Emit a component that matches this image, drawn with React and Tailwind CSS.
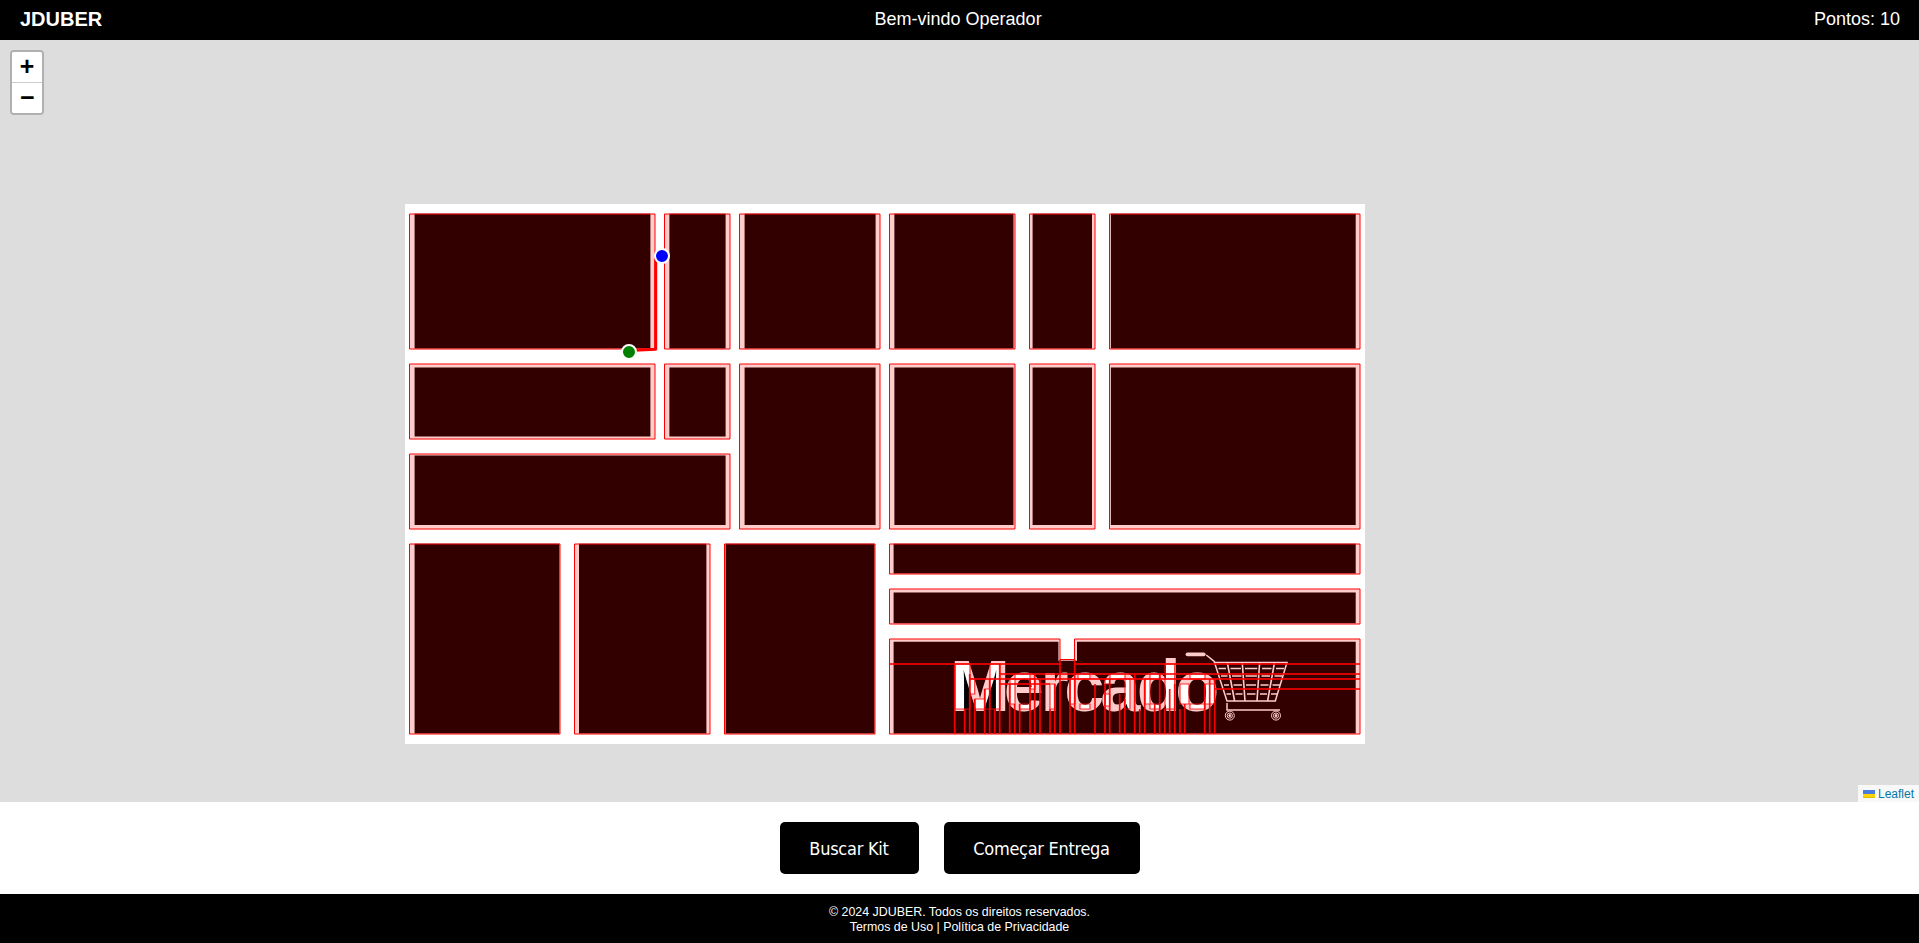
const BLOCKS = [
  [414.6, 213.8, 650.4, 348.6], [669.4, 213.8, 725.6, 348.6], [744.6, 213.8, 875.6, 348.6],
  [894.4, 213.8, 1013.5, 348.6], [1032.6, 213.8, 1092, 348.6], [1110.9, 213.8, 1355.7, 348.6],
  [414.6, 367.5, 650.4, 436.5], [669.4, 367.5, 725.6, 436.5], [744.6, 367.5, 875.6, 525],
  [894.4, 367.5, 1013.5, 525], [1032.6, 367.5, 1092, 525], [1110.9, 367.5, 1355.7, 525],
  [414.6, 455.5, 725.6, 525],
  [414.6, 543.8, 559.4, 733.5], [579, 543.8, 706.4, 733.5], [725.6, 543.8, 874.5, 733.5],
  [893.6, 543.8, 1355.7, 573.5], [893.6, 592.4, 1355.7, 623.3],
];

const ZONES = [
  [409.5, 214, 655, 349], [664.5, 214, 730, 349], [739.5, 214, 880, 349],
  [889.5, 214, 1015, 349], [1029.5, 214, 1095, 349], [1109.5, 214, 1360, 349],
  [409.5, 364, 655, 439], [664.5, 364, 730, 439], [739.5, 364, 880, 529],
  [889.5, 364, 1015, 529], [1029.5, 364, 1095, 529], [1109.5, 364, 1360, 529],
  [409.5, 454, 730, 529],
  [409.5, 544, 560, 734], [574.5, 544, 710, 734], [724.5, 544, 875, 734],
  [889.5, 544, 1360, 574], [889.5, 589, 1360, 624],
];

const box = ([x1, y1, x2, y2]) => `M${x1} ${y1}H${x2}V${y2}H${x1}Z`;

/* Letter cores left outside the blocked zones */
const CORES = [
  [955, 664, 970, 709], [970, 679, 974.7, 694], [975, 699, 985, 709], [985, 689, 990, 709], [990, 664, 1000, 709],
  [1010, 679, 1015, 704], [1019.5, 704, 1030, 709], [1030, 679, 1035, 689], [1015, 674, 1030, 679],
  [1050, 684, 1055, 709], [1070, 679, 1075, 704], [1080, 704, 1090, 709], [1078, 674, 1090, 679],
  [1105, 679, 1109.7, 684], [1110, 674, 1125, 679], [1125, 679, 1130, 709], [1105, 694, 1109.7, 706],
  [1145, 679, 1150, 704], [1150, 704, 1160, 709], [1165, 664, 1174.7, 709], [1150, 674, 1160, 679],
  [1180, 684, 1189, 704], [1190, 674, 1205, 679], [1190, 704, 1205, 709], [1205, 684, 1214.5, 704],
];

const VERTICALS = [
  [954.7, 664], [964.7, 709], [969.7, 674], [974.7, 699], [984.7, 689], [989.7, 679], [994.7, 709], [999.7, 664],
  [1009.7, 684], [1014.7, 704], [1019.7, 704], [1030, 679], [1034.7, 674], [1040, 679], [1050, 709], [1054.7, 684],
  [1060, 659.5], [1070, 679], [1074.7, 659.5], [1095, 684], [1105, 684], [1109.7, 679], [1119.7, 694], [1124.7, 699],
  [1134.7, 674], [1139.7, 709], [1144.7, 679], [1154.7, 704], [1159.7, 674], [1164.7, 709], [1169.7, 689],
  [1174.7, 684], [1180, 709], [1184.7, 704], [1204.7, 684], [1209.7, 679], [1214.7, 679],
];

const MARKET = "M889.5 639H1060V659.5H1074.5V639H1360V734H889.5Z";

function CartDrawing() {
  return (
    <g stroke="#fff" strokeWidth="1.5" fill="none">
      <path d="M1187.5 654.3H1203.7" strokeWidth="3.8" strokeLinecap="round" />
      <path d="M1206.3 655L1214.8 661.8" />
      <path d="M1214.5 662.5H1287L1275.3 701H1227Z" />
      <path d="M1227.4 663L1234.6 701M1242.3 663L1245 701M1259.6 663L1257 701M1274.4 663L1267.6 701" strokeWidth="1.6" />
      <path d="M1218.5 668.6H1226M1230.5 668.6H1241M1245 668.6H1257.3M1262 668.6H1271.5M1276 668.6H1284" />
      <path d="M1221 676H1227.5M1232 676H1241.5M1245.5 676H1257M1261.5 676H1270M1274.5 676H1282" />
      <path d="M1224 685H1229M1233.5 685H1242M1246 685H1256M1260.5 685H1268.5M1272.5 685H1280" />
      <path d="M1226.5 694H1231M1235.5 694H1242.5M1247 694H1255.5M1260 694H1267M1271 694H1277.5" />
      <path d="M1227 703V710H1280" />
      {[1229.8, 1276].map((cx) => (
        <g key={cx} strokeWidth="1">
          <circle cx={cx} cy="715.6" r="4.5" />
          <circle cx={cx} cy="715.6" r="2.6" />
          <circle cx={cx} cy="715.6" r="1" fill="#fff" />
        </g>
      ))}
    </g>
  );
}

function CityMap() {
  return (
    <svg className="block h-full w-full" viewBox="0 40 1919 762">
      <rect x="405" y="204" width="960" height="540" fill="#fff" />
      <path d={BLOCKS.map(box).join("")} fill="#000" />
      <path d="M893.6 641.8H1058.4V660.7H1077V641.8H1355.7V733.5H893.6Z" fill="#000" />
      <text
        x="950 1003.8 1040.4 1064.3 1100.2 1136.8 1175.2"
        y="711.2"
        fill="#fff"
        fontSize="72"
        fontWeight="700"
        fontFamily="'Liberation Sans', Arial, sans-serif"
      >
        Mercado
      </text>
      <CartDrawing />
      <path d={ZONES.map(box).join("")} fill="#f00" fillOpacity="0.2" stroke="#f00" strokeWidth="1" />
      <path d={MARKET + CORES.map(box).join("")} fill="#f00" fillOpacity="0.2" fillRule="evenodd" />
      <g fill="none" stroke="#f00" strokeWidth="1">
        <path d={MARKET} />
        <path d={CORES.map(box).join("")} strokeOpacity="0.8" strokeWidth="1.2" />
        <path d={VERTICALS.map(([x, y]) => `M${x} ${y}V734`).join("")} strokeOpacity="0.95" strokeWidth="1.7" />
        <path d="M889.5 664H1060M1074.5 664H1360M1000 674H1360M970 679H1360M1000 684H1050M1214 689H1360" strokeOpacity="0.8" strokeWidth="2" />
      </g>
      <path d="M662 256L655.7 259V349.3L629 350.5" fill="none" stroke="#f00" strokeWidth="3" strokeLinejoin="round" />
      <circle cx="662" cy="256" r="7" fill="#00f" stroke="#fff" strokeWidth="2" />
      <circle cx="629" cy="352" r="7" fill="#008000" stroke="#fff" strokeWidth="2" />
    </svg>
  );
}

export default function App() {
  return (
    <div className="flex h-[943px] flex-col bg-white font-['Liberation_Sans',Arial,sans-serif]">
      <header className="flex h-10 items-center justify-between bg-black pr-[19px] pb-0.5 pl-5 text-lg leading-none text-white">
        <h1 className="text-xl leading-none font-bold">JDUBER</h1>
        <p>Bem-vindo Operador</p>
        <p>Pontos: 10</p>
      </header>

      <main className="relative h-[762px] bg-[#ddd]">
        <CityMap />
        <div className="absolute top-2.5 left-2.5 w-[34px] overflow-hidden rounded-[4px] border-2 border-black/20 bg-clip-padding font-['Liberation_Mono',monospace] text-[25px] font-bold text-black">
          <button className="block h-[31px] w-[30px] border-b border-[#ccc] bg-white pt-0.5 text-center leading-[30px]">+</button>
          <button className="block h-[30px] w-[30px] bg-white pt-0.5 pl-px text-center leading-[30px]">−</button>
        </div>
        <div className="absolute right-0 bottom-0 flex h-[17px] w-[61px] items-center gap-[3px] bg-white/80 pl-[5px] text-xs leading-none text-[#0078a8]">
          <svg className="h-2 w-3" viewBox="0 0 12 8">
            <path fill="#4C7BE1" d="M0 0h12v4H0z" />
            <path fill="#FFD500" d="M0 4h12v3H0z" />
            <path fill="#E0BC00" d="M0 7h12v1H0z" />
          </svg>
          <a>Leaflet</a>
        </div>
      </main>

      <section className="flex h-[92px] items-center justify-center gap-[25px] bg-white font-['DejaVu_Sans_Condensed','DejaVu_Sans',sans-serif] text-lg text-white [font-stretch:condensed]">
        <button className="h-[52px] w-[139px] rounded-[5px] bg-black pt-px tracking-[-0.25px] whitespace-nowrap">Buscar Kit</button>
        <button className="h-[52px] w-[196px] rounded-[5px] bg-black pt-px tracking-[-0.3px] whitespace-nowrap">Começar Entrega</button>
      </section>

      <footer className="h-[49px] bg-black pt-[11px] text-center text-[12.4px] leading-[15px] text-white">
        <p>© 2024 JDUBER. Todos os direitos reservados.</p>
        <p>Termos de Uso | Política de Privacidade</p>
      </footer>
    </div>
  );
}
